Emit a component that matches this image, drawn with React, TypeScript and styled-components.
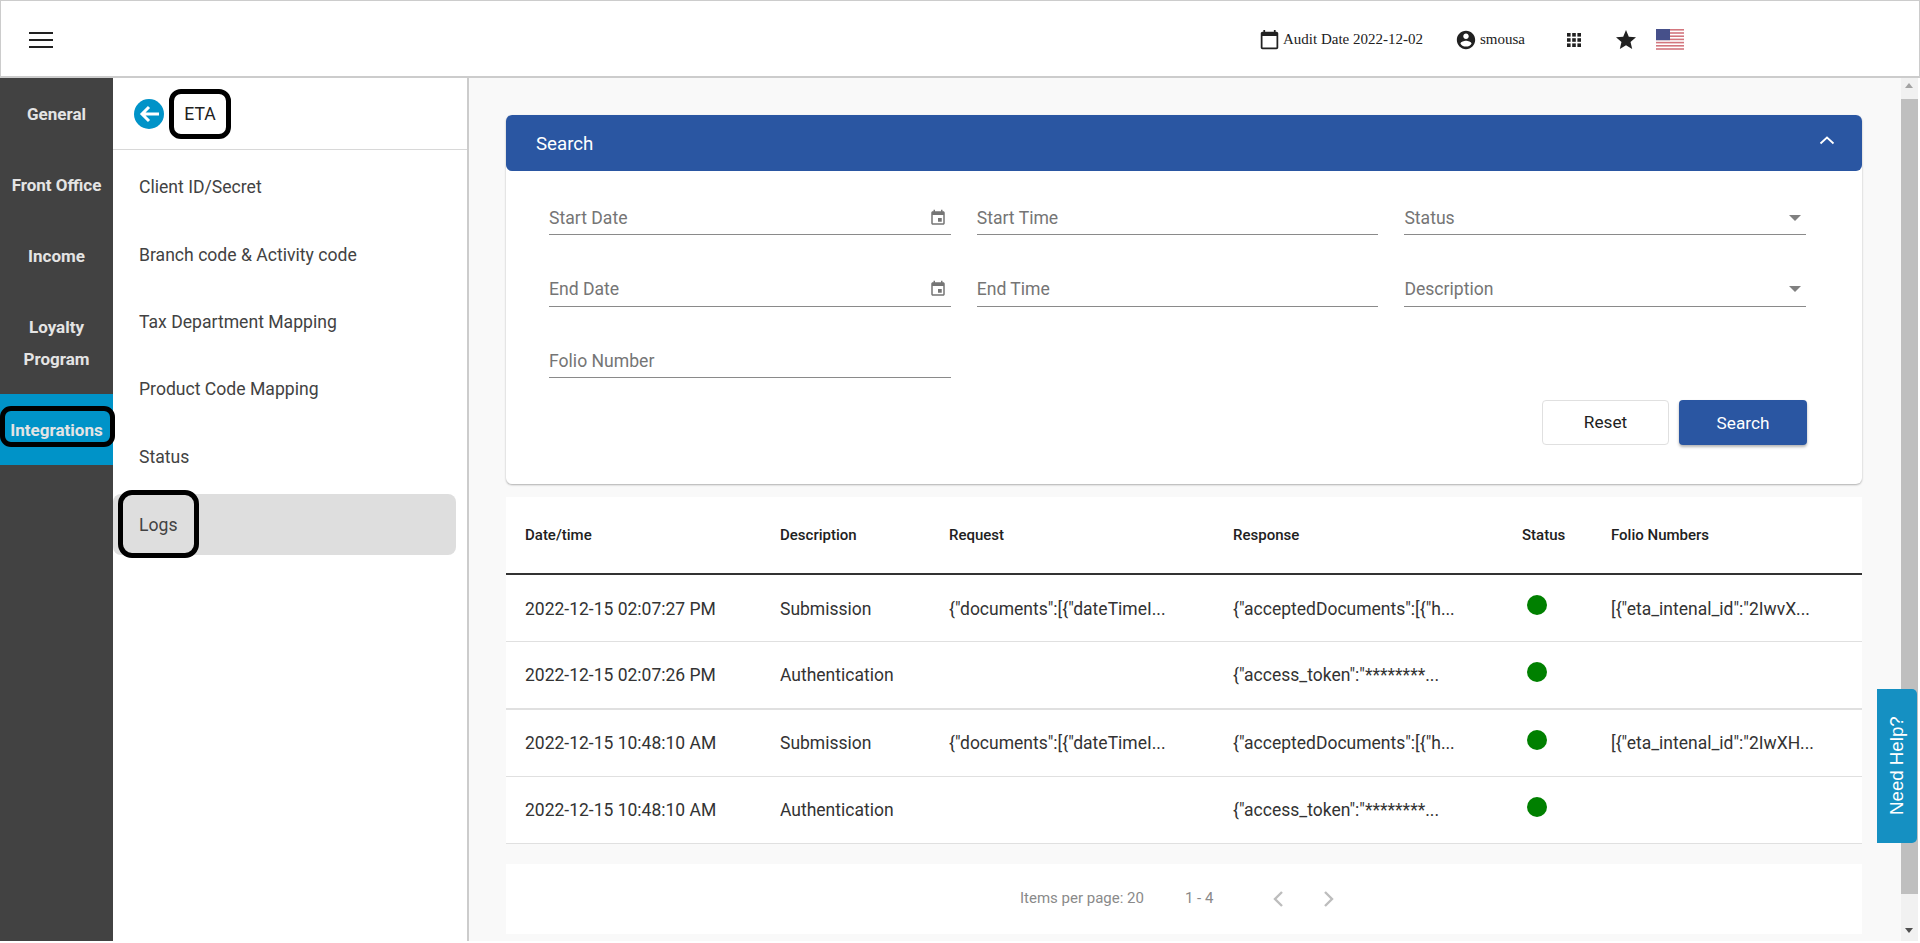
import React from "react";
import styled, { createGlobalStyle } from "styled-components";

const GlobalStyle = createGlobalStyle`
  html, body {
    margin: 0;
    padding: 0;
    height: 100%;
    overflow: hidden;
    background: #fff;
    font-family: Roboto, "Liberation Sans", sans-serif;
  }
  * { box-sizing: border-box; }
`;

const railItems = [
  { label: "General", height: 71 },
  { label: "Front Office", height: 71 },
  { label: "Income", height: 71 },
  { label: "Loyalty Program", height: 103, wrap: true },
  { label: "Integrations", height: 71, active: true },
];

const subItems = [
  "Client ID/Secret",
  "Branch code & Activity code",
  "Tax Department Mapping",
  "Product Code Mapping",
  "Status",
];

const rows = [
  {
    date: "2022-12-15 02:07:27 PM",
    description: "Submission",
    request: '{"documents":[{"dateTimeI...',
    response: '{"acceptedDocuments":[{"h...',
    folio: '[{"eta_intenal_id":"2IwvX...',
  },
  {
    date: "2022-12-15 02:07:26 PM",
    description: "Authentication",
    request: "",
    response: '{"access_token":"********...',
    folio: "",
    thick: true,
  },
  {
    date: "2022-12-15 10:48:10 AM",
    description: "Submission",
    request: '{"documents":[{"dateTimeI...',
    response: '{"acceptedDocuments":[{"h...',
    folio: '[{"eta_intenal_id":"2IwXH...',
  },
  {
    date: "2022-12-15 10:48:10 AM",
    description: "Authentication",
    request: "",
    response: '{"access_token":"********...',
    folio: "",
  },
];

const CalendarIcon = () => (
  <svg width="21" height="21" viewBox="0 0 24 24" fill="#212121">
    <path d="M20 3h-1V1h-2v2H7V1H5v2H4c-1.1 0-2 .9-2 2v16c0 1.1.9 2 2 2h16c1.1 0 2-.9 2-2V5c0-1.1-.9-2-2-2zm0 18H4V8h16v13z" />
  </svg>
);

const EventIcon = () => (
  <svg width="18" height="18" viewBox="0 0 24 24" fill="#757575">
    <path d="M17 12h-5v5h5v-5zM16 1v2H8V1H6v2H5c-1.11 0-1.99.9-1.99 2L3 19c0 1.1.89 2 2 2h14c1.1 0 2-.9 2-2V5c0-1.1-.9-2-2-2h-1V1h-2zm3 18H5V8h14v11z" />
  </svg>
);

const UserIcon = () => (
  <svg width="22" height="22" viewBox="0 0 24 24" fill="#212121">
    <path d="M12 2C6.48 2 2 6.48 2 12s4.48 10 10 10 10-4.48 10-10S17.52 2 12 2zm0 3c1.66 0 3 1.34 3 3s-1.34 3-3 3-3-1.34-3-3 1.34-3 3-3zm0 14.2c-2.5 0-4.71-1.28-6-3.22.03-1.99 4-3.08 6-3.08 1.99 0 5.97 1.09 6 3.08-1.29 1.94-3.5 3.22-6 3.22z" />
  </svg>
);

const AppsIcon = () => (
  <svg width="16" height="16" viewBox="0 0 16 16" fill="#212121">
    <rect x="1" y="1" width="3.6" height="3.6" />
    <rect x="6.2" y="1" width="3.6" height="3.6" />
    <rect x="11.4" y="1" width="3.6" height="3.6" />
    <rect x="1" y="6.2" width="3.6" height="3.6" />
    <rect x="6.2" y="6.2" width="3.6" height="3.6" />
    <rect x="11.4" y="6.2" width="3.6" height="3.6" />
    <rect x="1" y="11.4" width="3.6" height="3.6" />
    <rect x="6.2" y="11.4" width="3.6" height="3.6" />
    <rect x="11.4" y="11.4" width="3.6" height="3.6" />
  </svg>
);

const StarIcon = () => (
  <svg width="24" height="24" viewBox="0 0 24 24" fill="#212121">
    <path d="M12 17.27 18.18 21l-1.64-7.03L22 9.24l-7.19-.61L12 2 9.19 8.63 2 9.24l5.46 4.73L5.82 21z" />
  </svg>
);

const FlagIcon = () => (
  <svg width="28" height="21" viewBox="0 0 28 21">
    <rect width="28" height="21" fill="#fff" />
    {[0, 3.2, 6.4, 9.6, 12.8, 16, 19.2].map((y) => (
      <rect key={y} y={y} width="28" height="1.6" fill="#d3767e" />
    ))}
    <rect width="14" height="11.2" fill="#46508a" />
  </svg>
);

const App: React.FC = () => {
  return (
    <Page>
      <GlobalStyle />
      <TopBar>
        <MenuButton>
          <span />
          <span />
          <span />
        </MenuButton>
        <TopActions>
          <AuditDate>
            <CalendarIcon />
            Audit Date 2022-12-02
          </AuditDate>
          <UserName>
            <UserIcon />
            smousa
          </UserName>
          <IconSlot $gap={0}>
            <AppsIcon />
          </IconSlot>
          <IconSlot $gap={32}>
            <StarIcon />
          </IconSlot>
          <IconSlot $gap={18}>
            <FlagIcon />
          </IconSlot>
        </TopActions>
      </TopBar>

      <Body>
        <Rail>
          {railItems.map((item) => (
            <RailItem key={item.label} $height={item.height} $active={item.active}>
              <RailLabel $wrap={item.wrap}>{item.label}</RailLabel>
              {item.active && <RailMark />}
            </RailItem>
          ))}
        </Rail>

        <SubNav>
          <SubNavHead>
            <BackButton>
              <svg width="24" height="24" viewBox="0 0 24 24" fill="none" stroke="#fff" strokeWidth="3">
                <path d="M22 12H5M12 5l-7 7 7 7" />
              </svg>
            </BackButton>
            <EtaTitle>ETA</EtaTitle>
          </SubNavHead>
          <SubList>
            {subItems.map((label) => (
              <SubItem key={label}>{label}</SubItem>
            ))}
            <SubItemSelected>
              Logs
              <LogsMark />
            </SubItemSelected>
          </SubList>
        </SubNav>

        <Main>
          <SearchCard>
            <SearchHead>
              Search
              <svg width="16" height="16" viewBox="0 0 16 16" fill="none" stroke="#fff" strokeWidth="1.8">
                <path d="M1.5 10.5 8 4.5l6.5 6" />
              </svg>
            </SearchHead>
            <FormGrid>
              <Field>
                Start Date
                <EventIcon />
              </Field>
              <Field>Start Time</Field>
              <Field>
                Status
                <Caret />
              </Field>
              <Field>
                End Date
                <EventIcon />
              </Field>
              <Field>End Time</Field>
              <Field>
                Description
                <Caret />
              </Field>
              <Field>Folio Number</Field>
            </FormGrid>
            <FormActions>
              <ResetButton>Reset</ResetButton>
              <SubmitButton>Search</SubmitButton>
            </FormActions>
          </SearchCard>

          <TableCard>
            <HeadRow>
              <span>Date/time</span>
              <span>Description</span>
              <span>Request</span>
              <span>Response</span>
              <span>Status</span>
              <span>Folio Numbers</span>
            </HeadRow>
            {rows.map((row, i) => (
              <DataRow key={i} $thick={row.thick}>
                <span>{row.date}</span>
                <span>{row.description}</span>
                <span>{row.request}</span>
                <span>{row.response}</span>
                <StatusDot />
                <span>{row.folio}</span>
              </DataRow>
            ))}
          </TableCard>

          <Pager>
            <PagerText>Items per page: 20</PagerText>
            <PagerRange>1 - 4</PagerRange>
            <PagerArrow viewBox="0 0 14 20">
              <path d="M11 3 4 10l7 7" />
            </PagerArrow>
            <PagerArrow viewBox="0 0 14 20">
              <path d="M3 3l7 7-7 7" />
            </PagerArrow>
          </Pager>
        </Main>

        <ScrollTrack>
          <ScrollUp />
          <ScrollThumb />
          <ScrollDown />
        </ScrollTrack>

        <HelpTab>Need Help?</HelpTab>
      </Body>
    </Page>
  );
};

const Page = styled.div`
  width: 1920px;
  height: 943px;
  display: flex;
  flex-direction: column;
  overflow: hidden;
`;

const TopBar = styled.header`
  height: 78px;
  flex: none;
  display: flex;
  align-items: center;
  justify-content: space-between;
  border: 1px solid #ccc;
  border-bottom-width: 2px;
  background: #fff;
  padding-left: 28px;
`;

const MenuButton = styled.div`
  width: 24px;
  display: flex;
  flex-direction: column;
  gap: 5px;
  margin-top: 2px;

  span {
    display: block;
    height: 2px;
    background: #212121;
  }
`;

const TopActions = styled.div`
  display: flex;
  align-items: center;
  color: #212121;
  font-family: "Liberation Serif", serif;
  font-size: 15px;
  padding: 2px 235px 0 0;
`;

const AuditDate = styled.div`
  display: flex;
  align-items: center;
  gap: 3px;
  margin-right: 32px;

  svg {
    flex: none;
  }
`;

const UserName = styled.div`
  display: flex;
  align-items: center;
  gap: 3px;
  margin-right: 41px;
`;

const IconSlot = styled.div<{ $gap: number }>`
  margin-left: ${({ $gap }) => $gap}px;
  display: flex;
  align-items: center;
  justify-content: center;
`;

const Body = styled.div`
  flex: 1;
  min-height: 0;
  display: flex;
  position: relative;
  padding-bottom: 2px;
`;

const Rail = styled.nav`
  width: 113px;
  flex: none;
  background: #424242;
`;

const RailItem = styled.div<{ $height: number; $active?: boolean }>`
  position: relative;
  height: ${({ $height }) => $height}px;
  display: flex;
  align-items: center;
  justify-content: center;
  background: ${({ $active }) => ($active ? "#0093c8" : "transparent")};
`;

const RailLabel = styled.span<{ $wrap?: boolean }>`
  max-width: ${({ $wrap }) => ($wrap ? "80px" : "none")};
  color: #e4e4e4;
  font-size: 17px;
  font-weight: 700;
  line-height: 32px;
  text-align: center;
  white-space: ${({ $wrap }) => ($wrap ? "normal" : "nowrap")};
`;

const RailMark = styled.div`
  position: absolute;
  left: 0;
  right: -2px;
  top: 12px;
  height: 41px;
  border: 5px solid #000;
  border-radius: 11px;
`;

const SubNav = styled.aside`
  width: 356px;
  flex: none;
  background: #fff;
  border-right: 2px solid #ccc;
  display: flex;
  flex-direction: column;
`;

const SubNavHead = styled.div`
  height: 72px;
  flex: none;
  display: flex;
  align-items: center;
  gap: 5px;
  padding-left: 21px;
  border-bottom: 1px solid #d8d8d8;
`;

const BackButton = styled.div`
  width: 30px;
  height: 30px;
  border-radius: 50%;
  background: #0093c8;
  display: flex;
  align-items: center;
  justify-content: center;
`;

const EtaTitle = styled.div`
  width: 62px;
  height: 50px;
  border: 5px solid #000;
  border-radius: 12px;
  display: flex;
  align-items: center;
  justify-content: center;
  color: #212121;
  font-size: 17.6px;
`;

const SubList = styled.div`
  display: flex;
  flex-direction: column;
  padding-top: 3.5px;
`;

const SubItem = styled.div`
  height: 67.4px;
  display: flex;
  align-items: center;
  padding-left: 26px;
  color: #424242;
  font-size: 17.6px;
`;

const SubItemSelected = styled.div`
  position: relative;
  height: 61px;
  margin-top: 4px;
  margin-right: 11px;
  display: flex;
  align-items: center;
  padding-left: 26px;
  background: #dedede;
  border-radius: 8px;
  color: #424242;
  font-size: 17.6px;
`;

const LogsMark = styled.div`
  position: absolute;
  left: 5px;
  top: -4px;
  width: 81px;
  height: 68px;
  border: 5px solid #000;
  border-radius: 14px;
`;

const Main = styled.main`
  flex: 1;
  min-width: 0;
  background: #f9f9f9;
  padding: 37px 39px 0 37px;
`;

const SearchCard = styled.section`
  background: #fff;
  border-radius: 6px;
  box-shadow: 0 1px 2px rgba(0, 0, 0, 0.3);
  height: 369px;
`;

const SearchHead = styled.div`
  height: 56px;
  display: flex;
  align-items: center;
  justify-content: space-between;
  padding: 1px 27px 0 30px;
  background: #2a56a2;
  border-radius: 6px;
  color: #fff;
  font-size: 18.7px;

  svg {
    margin-bottom: 6px;
  }
`;

const FormGrid = styled.div`
  display: grid;
  grid-template-columns: repeat(3, 401.7px);
  column-gap: 26px;
  row-gap: 33.5px;
  padding: 26px 0 0 43px;
`;

const Field = styled.div`
  height: 38px;
  display: flex;
  align-items: center;
  justify-content: space-between;
  padding: 4px 4px 0 0;
  border-bottom: 1px solid #8a8a8a;
  color: #757575;
  font-size: 17.6px;
`;

const Caret = styled.span`
  width: 0;
  height: 0;
  border-left: 6px solid transparent;
  border-right: 6px solid transparent;
  border-top: 6px solid #808080;
  margin-right: 1px;
`;

const FormActions = styled.div`
  display: flex;
  justify-content: flex-end;
  gap: 10px;
  padding: 22px 55px 0 0;
`;

const ResetButton = styled.button`
  width: 127px;
  height: 45px;
  padding-bottom: 3px;
  background: #fff;
  border: 1px solid #e0e0e0;
  border-radius: 4px;
  color: #212121;
  font-family: inherit;
  font-size: 17.2px;
`;

const SubmitButton = styled.button`
  width: 128px;
  height: 45px;
  background: #2a56a2;
  border: none;
  border-radius: 4px;
  box-shadow: 0 2px 3px rgba(0, 0, 0, 0.3);
  color: #fff;
  font-family: inherit;
  font-size: 17.2px;
`;

const TableCard = styled.section`
  margin-top: 13px;
  background: #fff;
`;

const columns = "255px 169px 284px 289px 89px 1fr";

const HeadRow = styled.div`
  height: 78px;
  display: grid;
  grid-template-columns: ${columns};
  align-items: center;
  padding-left: 19px;
  border-bottom: 2px solid #333;
  color: #212121;
  font-size: 15px;
  font-weight: 500;
`;

const DataRow = styled.div<{ $thick?: boolean }>`
  height: 67.25px;
  display: grid;
  grid-template-columns: ${columns};
  align-items: center;
  padding: 1px 0 0 19px;
  border-bottom: ${({ $thick }) => ($thick ? 2 : 1)}px solid #e0e0e0;
  color: #333;
  font-size: 17.5px;
  white-space: nowrap;
`;

const StatusDot = styled.span`
  width: 20px;
  height: 20px;
  margin: 0 0 7px 5px;
  border-radius: 50%;
  background: #008000;
`;

const Pager = styled.div`
  height: 70px;
  margin-top: 20px;
  display: flex;
  align-items: center;
  padding-left: 514px;
  background: #fff;
  color: #8a8a8a;
  font-size: 15px;
`;

const PagerText = styled.span`
  margin-bottom: 3px;
`;

const PagerRange = styled.span`
  margin: 0 0 3px 41px;
`;

const PagerArrow = styled.svg`
  width: 14px;
  height: 20px;
  margin-left: 58px;
  fill: none;
  stroke: #bdbdbd;
  stroke-width: 2.4;

  & + & {
    margin-left: 37px;
  }
`;

const ScrollTrack = styled.div`
  width: 19px;
  flex: none;
  display: flex;
  flex-direction: column;
  align-items: flex-start;
  background: linear-gradient(to right, #f1f1f1 17px, #fff 17px);
`;

const ScrollUp = styled.span`
  width: 0;
  height: 0;
  margin: 5px 4px 11px;
  border-left: 4.5px solid transparent;
  border-right: 4.5px solid transparent;
  border-bottom: 5px solid #a3a3a3;
`;

const ScrollThumb = styled.span`
  width: 17px;
  height: 795px;
  background: #bfbfbf;
`;

const ScrollDown = styled.span`
  width: 0;
  height: 0;
  margin: 34px 4px 0;
  border-left: 4.5px solid transparent;
  border-right: 4.5px solid transparent;
  border-top: 5px solid #505050;
`;

const HelpTab = styled.div`
  position: absolute;
  right: 3px;
  top: 611px;
  width: 40px;
  height: 154px;
  display: flex;
  align-items: center;
  justify-content: center;
  background: #1590c2;
  border-radius: 5px 0 0 5px;
  color: #fff;
  font-family: "Liberation Sans", sans-serif;
  font-size: 18.7px;
  writing-mode: vertical-rl;
  rotate: 180deg;
`;

export default App;
